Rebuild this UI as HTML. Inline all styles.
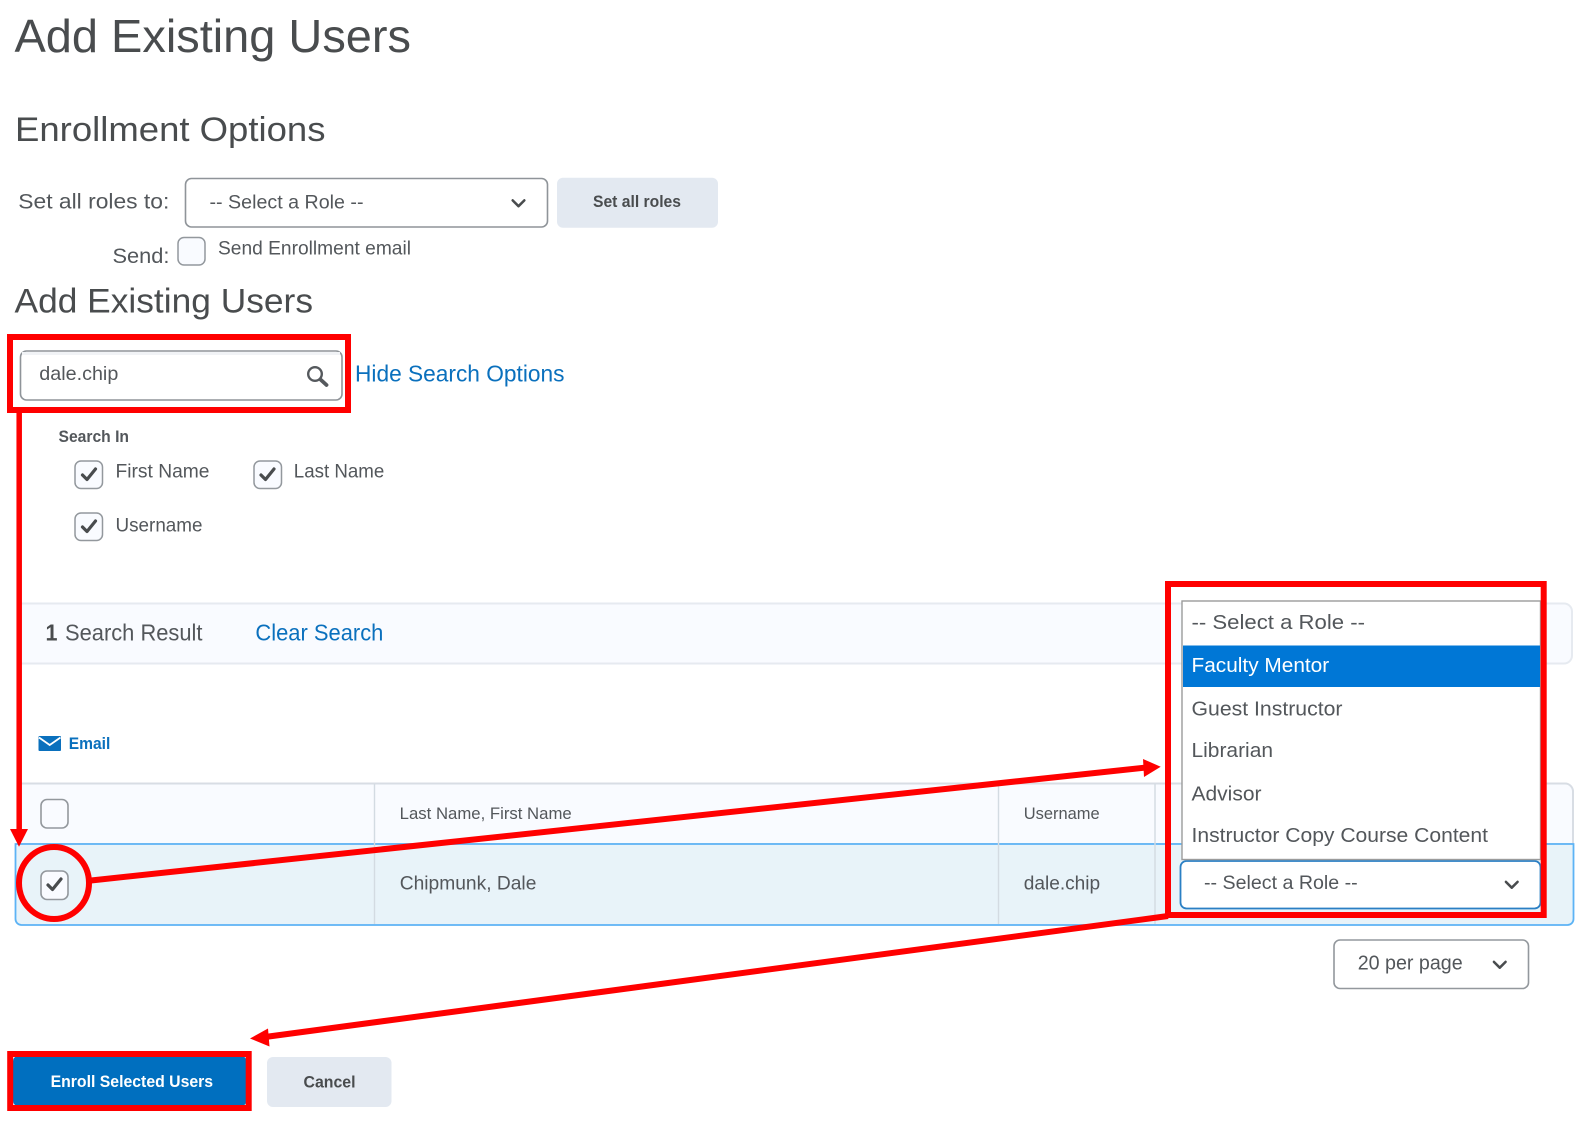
<!DOCTYPE html>
<html lang="en"><head><meta charset="utf-8"><title>Add Existing Users</title>
<style>
html,body{margin:0;padding:0;background:#fff;width:1586px;height:1125px;overflow:hidden}
svg{display:block}
text{font-family:"Liberation Sans",sans-serif;fill:#53575b}
.b{font-weight:bold}
.l{fill:#0a70bd}
.h{fill:#494c4e}
</style></head><body>
<svg width="1586" height="1125" viewBox="0 0 1586 1125" xmlns="http://www.w3.org/2000/svg">
<defs>
<symbol id="ch" viewBox="0 0 16 10" overflow="visible"><path d="M1.5 1.5L8 8L14.5 1.5" fill="none" stroke="#494c4e" stroke-width="2.8" stroke-linecap="round" stroke-linejoin="round"/></symbol>
<symbol id="ck" viewBox="0 0 28 28" overflow="visible"><path d="M7.5 14.5L12 19L20.5 8.5" fill="none" stroke="#494c4e" stroke-width="3.2" stroke-linecap="round" stroke-linejoin="round"/></symbol>
</defs>

<text x="14.5" y="52" font-size="46" textLength="396.5" lengthAdjust="spacingAndGlyphs" class="h">Add Existing Users</text>
<text x="15" y="141" font-size="34" textLength="310.5" lengthAdjust="spacingAndGlyphs" class="h">Enrollment Options</text>

<text x="18.3" y="208.5" font-size="21" textLength="151" lengthAdjust="spacingAndGlyphs">Set all roles to:</text>
<rect x="185.5" y="178.5" width="362" height="48.5" rx="6" fill="#fff" stroke="#8f9499" stroke-width="1.6"/>
<text x="209.5" y="208.5" font-size="19.5" textLength="154" lengthAdjust="spacingAndGlyphs">-- Select a Role --</text>
<use href="#ch" x="511" y="199" width="15" height="9"/>
<rect x="557" y="177.7" width="161" height="50" rx="6" fill="#e3e9f1"/>
<text x="593" y="207.2" font-size="16.5" class="b h" textLength="88" lengthAdjust="spacingAndGlyphs">Set all roles</text>

<text x="112.5" y="263" font-size="21" textLength="57" lengthAdjust="spacingAndGlyphs">Send:</text>
<rect x="178" y="237.5" width="27" height="27.5" rx="6" fill="#f9fbff" stroke="#93989d" stroke-width="1.5"/>
<text x="218" y="254.7" font-size="19.5" textLength="193" lengthAdjust="spacingAndGlyphs">Send Enrollment email</text>

<text x="14.5" y="312.7" font-size="34" textLength="298.5" lengthAdjust="spacingAndGlyphs" class="h">Add Existing Users</text>

<rect x="20.5" y="351" width="321.5" height="49" rx="6" fill="#fff" stroke="#8f9499" stroke-width="1.6"/>
<rect x="22" y="352" width="318" height="3" fill="#f1f3f6"/>
<text x="39.3" y="380" font-size="19.5" textLength="79" lengthAdjust="spacingAndGlyphs">dale.chip</text>
<circle cx="315" cy="374" r="6.8" fill="none" stroke="#55595d" stroke-width="2.4"/>
<path d="M320.5 379.5L326.5 385" stroke="#55595d" stroke-width="3.8" stroke-linecap="round"/>
<text x="355" y="381.7" font-size="23" class="l" textLength="209.5" lengthAdjust="spacingAndGlyphs">Hide Search Options</text>

<text x="58.5" y="442" font-size="16.5" class="b" textLength="70.5" lengthAdjust="spacingAndGlyphs">Search In</text>
<rect x="75" y="461" width="27.5" height="27.5" rx="6" fill="#f9fbff" stroke="#93989d" stroke-width="1.5"/>
<use href="#ck" x="75" y="460.5" width="28" height="28"/>
<text x="115.5" y="477.5" font-size="19.5" textLength="94" lengthAdjust="spacingAndGlyphs">First Name</text>
<rect x="254" y="461" width="27.5" height="27.5" rx="6" fill="#f9fbff" stroke="#93989d" stroke-width="1.5"/>
<use href="#ck" x="253.5" y="460.5" width="28" height="28"/>
<text x="293.8" y="477.5" font-size="19.5" textLength="90.5" lengthAdjust="spacingAndGlyphs">Last Name</text>
<rect x="75" y="513" width="27.5" height="27.5" rx="6" fill="#f9fbff" stroke="#93989d" stroke-width="1.5"/>
<use href="#ck" x="75" y="512.5" width="28" height="28"/>
<text x="115.5" y="531.5" font-size="19.5" textLength="87" lengthAdjust="spacingAndGlyphs">Username</text>

<!-- result bar -->
<path d="M19 603.5H1564a8 8 0 0 1 8 8V655.5a8 8 0 0 1-8 8H19Z" fill="#f9fbff" stroke="#e6eaf0" stroke-width="2"/>
<text x="45.5" y="640.7" font-size="23" class="b h" textLength="12" lengthAdjust="spacingAndGlyphs">1</text>
<text x="65" y="640.7" font-size="23" textLength="137.5" lengthAdjust="spacingAndGlyphs">Search Result</text>
<text x="255.4" y="640.7" font-size="23" class="l" textLength="128" lengthAdjust="spacingAndGlyphs">Clear Search</text>

<!-- email -->
<rect x="38.5" y="736" width="22.5" height="15" rx="1" fill="#0a70bd"/>
<path d="M39 737.5L49.7 745L60.5 737.5" fill="none" stroke="#fff" stroke-width="1.8"/>
<text x="68.8" y="749" font-size="16.5" class="b l" textLength="41.5" lengthAdjust="spacingAndGlyphs">Email</text>

<!-- table -->
<path d="M19 844V783.5H1565a8 8 0 0 1 8 8.5V844Z" fill="#f9fbff" stroke="#d8dde4" stroke-width="2"/>
<path d="M15.5 844H1573.5V919a6 6 0 0 1-6 6H21.5a6 6 0 0 1-6-6Z" fill="#e8f3f9" stroke="#5cb3f5" stroke-width="1.8"/>
<path d="M374.5 784V924M998.5 784V924M1155 784V924" stroke="#d3dbe2" stroke-width="1.4"/>
<rect x="41" y="799.5" width="27" height="28.5" rx="6" fill="#f9fbff" stroke="#93989d" stroke-width="1.6"/>
<text x="399.7" y="819" font-size="16.5" textLength="172" lengthAdjust="spacingAndGlyphs">Last Name, First Name</text>
<text x="1023.7" y="819" font-size="16.5" textLength="76" lengthAdjust="spacingAndGlyphs">Username</text>
<rect x="41" y="871" width="27" height="28.5" rx="6" fill="#f9fbff" stroke="#93989d" stroke-width="1.6"/>
<use href="#ck" x="40.5" y="870.5" width="28" height="28"/>
<text x="399.7" y="889.5" font-size="19.5" textLength="136.7" lengthAdjust="spacingAndGlyphs">Chipmunk, Dale</text>
<text x="1023.7" y="889.5" font-size="19.5" textLength="76.5" lengthAdjust="spacingAndGlyphs">dale.chip</text>

<!-- row select -->
<rect x="1180.5" y="861" width="360" height="47.5" rx="6" fill="#fff" stroke="#2a7fc4" stroke-width="1.8"/>
<text x="1204" y="889" font-size="19.5" textLength="153.7" lengthAdjust="spacingAndGlyphs">-- Select a Role --</text>
<use href="#ch" x="1504" y="880.5" width="15.5" height="9"/>

<!-- dropdown list -->
<rect x="1182" y="601" width="358.5" height="258.5" fill="#fff" stroke="#9b9b9b" stroke-width="1.4"/>
<rect x="1183" y="645.5" width="357" height="41.5" fill="#0077d6"/>
<text x="1191.5" y="629" font-size="20" textLength="173.5" lengthAdjust="spacingAndGlyphs">-- Select a Role --</text>
<text x="1191.5" y="672" font-size="20" style="fill:#fff" textLength="137.7" lengthAdjust="spacingAndGlyphs">Faculty Mentor</text>
<text x="1191.5" y="715.5" font-size="20" textLength="151" lengthAdjust="spacingAndGlyphs">Guest Instructor</text>
<text x="1191.5" y="756.8" font-size="20" textLength="81.5" lengthAdjust="spacingAndGlyphs">Librarian</text>
<text x="1191.5" y="800.5" font-size="20" textLength="70" lengthAdjust="spacingAndGlyphs">Advisor</text>
<text x="1191.5" y="842" font-size="20" textLength="296.5" lengthAdjust="spacingAndGlyphs">Instructor Copy Course Content</text>

<!-- per page -->
<rect x="1334" y="940" width="194.5" height="48.5" rx="6" fill="#fff" stroke="#93989d" stroke-width="1.6"/>
<text x="1357.7" y="969.5" font-size="20" textLength="105" lengthAdjust="spacingAndGlyphs">20 per page</text>
<use href="#ch" x="1492" y="960.5" width="15.5" height="9"/>

<!-- buttons -->
<rect x="13" y="1056" width="233.5" height="50" rx="5" fill="#006fbf"/>
<text x="50.6" y="1087.2" font-size="17" class="b" style="fill:#fff" textLength="162.5" lengthAdjust="spacingAndGlyphs">Enroll Selected Users</text>
<rect x="267" y="1057" width="124.5" height="50" rx="6" fill="#e3e9f1"/>
<text x="303.5" y="1087.5" font-size="17" class="b h" textLength="52" lengthAdjust="spacingAndGlyphs">Cancel</text>

<!-- red annotations -->
<g fill="none" stroke="#ff0000">
<rect x="10" y="337" width="338" height="73" stroke-width="6"/>
<rect x="1168" y="584" width="375.7" height="331" stroke-width="6"/>
<rect x="10.2" y="1054" width="238.5" height="54" stroke-width="6"/>
<ellipse cx="54" cy="883" rx="35" ry="36" stroke-width="6"/>
<path d="M19.2 410V832" stroke-width="5.5"/>
<path d="M91 880.5L1146 767.5" stroke-width="6"/>
<path d="M1168 916L265 1037" stroke-width="6"/>
</g>
<g fill="#ff0000">
<path d="M10 829H28L19 846.7Z"/>
<path d="M1160.7 766.7L1143 759L1144 777Z"/>
<path d="M250 1038.5L268 1028.5L269.5 1046.5Z"/>
</g>
</svg>
</body></html>
